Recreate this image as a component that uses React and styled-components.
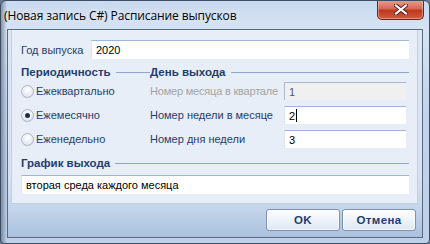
import React from "react";
import styled, { createGlobalStyle } from "styled-components";

const GlobalStyle = createGlobalStyle`
  html, body { margin: 0; padding: 0; }
  body { width: 430px; height: 244px; overflow: hidden; background: #6b7d94; }
  #root { width: 430px; height: 244px; }
`;

const Win = styled.div`
  box-sizing: border-box;
  width: 430px;
  height: 244px;
  border: 1px solid #3d4c60;
  border-radius: 6px 6px 4px 4px;
  background:
    linear-gradient(90deg, rgba(70, 85, 105, 0.55) 0px, rgba(70, 85, 105, 0.0) 6px),
    linear-gradient(180deg, #c9d9ee 0%, #d6e3f3 12%, #c2d4eb 45%, #bcd0ea 100%);
  display: flex;
  flex-direction: column;
  font-family: "Liberation Sans", Arial, sans-serif;
  overflow: hidden;
`;

const TitleBar = styled.div`
  height: 28px;
  display: flex;
  align-items: flex-start;
  padding-left: 3px;
  flex: none;
`;

const Title = styled.div`
  font-family: "Open Sans", "Noto Sans", sans-serif;
  font-size: 12px;
  color: #000;
  line-height: 16px;
  margin-top: 7px;
  text-shadow: 0 0 6px rgba(255, 255, 255, 0.9);
  letter-spacing: -0.1px;
`;

const CloseBtn = styled.div`
  margin-left: auto;
  margin-right: 5px;
  margin-top: -1px;
  width: 47px;
  height: 20px;
  box-sizing: border-box;
  border: 1px solid #5a2a24;
  border-top: none;
  border-radius: 0 0 5px 5px;
  background: linear-gradient(180deg, #e8a08f 0%, #d46a55 45%, #c0391f 55%, #d25a3c 100%);
  box-shadow: inset 0 0 0 1px rgba(255, 200, 190, 0.5);
  display: flex;
  align-items: center;
  justify-content: center;
`;

const Client = styled.div`
  box-sizing: border-box;
  margin: 0 6px 0 6px;
  height: 209px;
  border: 1px solid #59697e;
  background: linear-gradient(180deg, #dce7f4 0%, #d6e2f1 70%, #c6d7ec 85%, #a9c1df 100%);
  display: flex;
  flex-direction: column;
`;

const Panel = styled.div`
  box-sizing: border-box;
  margin: 0 4px 0 3px;
  height: 174px;
  border: 1px solid #c0cfe2;
  border-top: none;
  background: #e8eef7;
  padding: 10px 8px 0 9px;
  display: flex;
  flex-direction: column;
`;

const Row = styled.div`
  display: flex;
  align-items: center;
  height: ${(p) => p.$h || 18}px;
  margin-top: ${(p) => p.$mt || 0}px;
`;

const Label = styled.div`
  font-size: 11px;
  letter-spacing: ${(p) => (p.$tight ? "-0.2px" : "0")};
  color: ${(p) => (p.$disabled ? "#a3a3a3" : "#1f3d6b")};
  width: ${(p) => (p.$w ? `${p.$w}px` : "auto")};
  white-space: nowrap;
  flex: none;
`;

const Field = styled.div`
  box-sizing: border-box;
  height: ${(p) => p.$h || 18}px;
  width: ${(p) => (p.$w ? `${p.$w}px` : "auto")};
  flex: ${(p) => (p.$w ? "none" : "1")};
  margin-right: ${(p) => p.$mr || 0}px;
  background: ${(p) => (p.$disabled ? "#f0f0f0" : "#fff")};
  border-top: 1px solid ${(p) => (p.$disabled ? "#a9b8cc" : "#9fb5d5")};
  border-left: 1px solid ${(p) => (p.$disabled ? "#a9b8cc" : "#dfe6ef")};
  padding-left: 4px;
  display: flex;
  align-items: center;
  font-size: 11px;
  color: ${(p) => (p.$disabled ? "#4c5a6e" : "#000")};
`;

const Caret = styled.span`
  display: inline-block;
  width: 1px;
  height: 13px;
  background: #000;
  margin-left: 1px;
`;

const Heading = styled.div`
  display: flex;
  align-items: center;
  flex: ${(p) => (p.$grow ? 1 : "none")};
  width: ${(p) => (p.$w ? `${p.$w}px` : "auto")};
  font-size: 11.5px;
  font-weight: bold;
  color: #1e3e72;
  white-space: nowrap;
  &::after {
    content: "";
    flex: 1;
    height: 1px;
    background: #8ea9cf;
    margin-left: 5px;
  }
`;

const Columns = styled.div`
  display: flex;
  margin-top: 2px;
`;

const Col = styled.div`
  display: flex;
  flex-direction: column;
  gap: 6px;
  width: ${(p) => (p.$w ? `${p.$w}px` : "auto")};
  flex: ${(p) => (p.$w ? "none" : 1)};
`;

const RadioRow = styled.div`
  display: flex;
  align-items: center;
  height: 18px;
  gap: 1px;
  font-size: 11px;
  color: #1f3d6b;
`;

const RadioCircle = styled.span`
  box-sizing: border-box;
  width: 13px;
  height: 13px;
  border-radius: 50%;
  border: 1px solid #a9b6c8;
  background: radial-gradient(circle at 50% 35%, #ffffff 0%, #eef1f6 45%, #d3dbe6 100%);
  display: flex;
  align-items: center;
  justify-content: center;
  margin-right: 1px;
  &::after {
    content: "";
    width: 5px;
    height: 5px;
    border-radius: 50%;
    background: ${(p) => (p.$checked ? "#1b2f55" : "transparent")};
  }
`;

const Footer = styled.div`
  flex: 1;
  display: flex;
  justify-content: flex-end;
  align-items: flex-start;
  gap: 2px;
  padding: 5px 6px 0 0;
`;

const Button = styled.div`
  box-sizing: border-box;
  width: 74px;
  height: 22px;
  border: 1px solid #7f93b0;
  border-radius: 3px;
  background: linear-gradient(180deg, #fdfeff 0%, #eef3fa 50%, #dde7f3 100%);
  box-shadow: inset 0 0 0 1px rgba(255, 255, 255, 0.7);
  display: flex;
  align-items: center;
  justify-content: center;
  font-size: 11.5px;
  font-weight: bold;
  color: #1e3e72;
  letter-spacing: 0.4px;
`;

const CloseIcon = () => (
  <svg width="14" height="11" viewBox="0 0 14 11">
    <path d="M2 1.5 L12 9.5 M12 1.5 L2 9.5" stroke="#4a1f1a" strokeWidth="4" strokeLinecap="square" />
    <path d="M2 1.5 L12 9.5 M12 1.5 L2 9.5" stroke="#fff" strokeWidth="2.2" strokeLinecap="square" />
  </svg>
);

export default function App() {
  return (
    <>
      <GlobalStyle />
      <Win>
        <TitleBar>
          <Title>(Новая запись C#) Расписание выпусков</Title>
          <CloseBtn>
            <CloseIcon />
          </CloseBtn>
        </TitleBar>
        <Client>
          <Panel>
            <Row $h={19}>
              <Label $w={70}>Год выпуска</Label>
              <Field $h={19}>2020</Field>
            </Row>
            <Row $h={16} $mt={5}>
              <Heading $w={129}>Периодичность</Heading>
              <Heading $grow>День выхода</Heading>
            </Row>
            <Columns>
              <Col $w={129}>
                <RadioRow>
                  <RadioCircle />
                  Ежеквартально
                </RadioRow>
                <RadioRow>
                  <RadioCircle $checked />
                  Ежемесячно
                </RadioRow>
                <RadioRow>
                  <RadioCircle />
                  Еженедельно
                </RadioRow>
              </Col>
              <Col>
                <Row>
                  <Label $w={134} $disabled $tight>Номер месяца в квартале</Label>
                  <Field $w={122} $mr={4} $disabled>1</Field>
                </Row>
                <Row>
                  <Label $w={134}>Номер недели в месяце</Label>
                  <Field $w={122} $mr={4}>
                    2<Caret />
                  </Field>
                </Row>
                <Row>
                  <Label $w={134}>Номер дня недели</Label>
                  <Field $w={122} $mr={4}>3</Field>
                </Row>
              </Col>
            </Columns>
            <Row $h={16} $mt={7}>
              <Heading $grow>График выхода</Heading>
            </Row>
            <Row $h={19} $mt={4}>
              <Field $h={19}>вторая среда каждого месяца</Field>
            </Row>
          </Panel>
          <Footer>
            <Button>OK</Button>
            <Button>Отмена</Button>
          </Footer>
        </Client>
      </Win>
    </>
  );
}
